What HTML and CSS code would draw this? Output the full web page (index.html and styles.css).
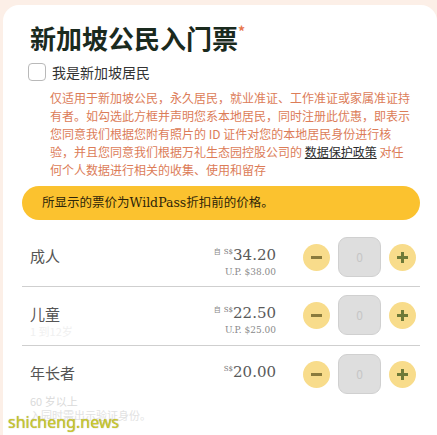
FILE: index.html
```html
<!DOCTYPE html>
<html lang="zh">
<head>
  <meta charset="UTF-8" />
  <meta name="viewport" content="width=device-width, initial-scale=1.0"/>
  <title>新加坡公民入门票</title>
  <link rel="stylesheet" href="styles.css">
</head>
<body>
  <div class="card">
    <h1 class="ticket-title">新加坡公民入门票<span class="required">*</span></h1>

    <label class="resident-check">
      <span class="checkbox"></span>
      <span>我是新加坡居民</span>
    </label>

    <p class="notice">
      仅适用于新加坡公民，永久居民，就业准证、工作准证或家属准证持<br>
      有者。如勾选此方框并声明您系本地居民，同时注册此优惠，即表示<br>
      您同意我们根据您附有照片的 ID 证件对您的本地居民身份进行核<br>
      验，并且您同意我们根据万礼生态园控股公司的 <a href="#">数据保护政策</a> 对任<br>
      何个人数据进行相关的收集、使用和留存
    </p>

    <div class="banner">所显示的票价为WildPass折扣前的价格。</div>

    <div class="ticket-list">
      <div class="ticket-row">
        <div class="ticket-info">
          <div class="ticket-name">成人</div>
        </div>
        <div class="price">
          <div class="price-main"><span class="from">自</span><span class="cur">S$</span>34.20</div>
          <div class="price-up">U.P. $38.00</div>
        </div>
        <div class="stepper">
          <span class="step-btn minus"></span>
          <span class="qty">0</span>
          <span class="step-btn plus"></span>
        </div>
      </div>

      <div class="ticket-row">
        <div class="ticket-info">
          <div class="ticket-name">儿童</div>
          <div class="ticket-sub faint">1 到12岁</div>
        </div>
        <div class="price">
          <div class="price-main"><span class="from">自</span><span class="cur">S$</span>22.50</div>
          <div class="price-up">U.P. $25.00</div>
        </div>
        <div class="stepper">
          <span class="step-btn minus"></span>
          <span class="qty">0</span>
          <span class="step-btn plus"></span>
        </div>
      </div>

      <div class="ticket-row last">
        <div class="ticket-info">
          <div class="ticket-name">年长者</div>
          <div class="ticket-sub senior">60 岁以上</div>
          <div class="ticket-sub">入园时需出示验证身份。</div>
        </div>
        <div class="price">
          <div class="price-main"><span class="cur">S$</span>20.00</div>
        </div>
        <div class="stepper">
          <span class="step-btn minus"></span>
          <span class="qty">0</span>
          <span class="step-btn plus"></span>
        </div>
      </div>
    </div>
  </div>

  <div class="watermark">shicheng.news</div>
</body>
</html>
```

FILE: styles.css
```css
body {
  font-family: "Noto Sans CJK SC", "Noto Sans", sans-serif;
  background: #fcefe7;
  margin: 0;
  padding: 0;
  height: 435px;
  overflow: hidden;
}

.card {
  margin: 5px 0 0 3px;
  background: #fff;
  border-radius: 16px 16px 0 0;
  padding: 17px 17px 0 19px;
  min-height: 430px;
  box-sizing: border-box;
}

.ticket-title {
  margin: 0 0 0 8px;
  font-size: 26px;
  line-height: 32px;
  font-weight: 700;
  color: #1a2a1e;
}

.required {
  color: #e8764d;
  font-size: 14px;
  vertical-align: top;
  line-height: 18px;
}

.resident-check {
  display: flex;
  align-items: center;
  height: 20px;
  margin-top: 8px;
  font-size: 14px;
  color: #333;
}

.checkbox {
  width: 16px;
  height: 16px;
  border: 1px solid #b9b9b9;
  border-radius: 4px;
  margin: 0 6px 0 6px;
}

.notice {
  margin: 7px 0 0 28px;
  font-size: 12px;
  line-height: 18px;
  color: #dc7c58;
  white-space: nowrap;
}

.notice a {
  color: #2b2b2b;
  text-decoration: underline;
}

.banner {
  margin-top: 7px;
  height: 34px;
  line-height: 34px;
  border-radius: 17px;
  background: #fbc22f;
  padding-left: 20px;
  font-family: "DejaVu Serif", "Noto Sans CJK SC", serif;
  font-size: 12.5px;
  color: #2e2508;
}

.ticket-list {
  margin-top: 9px;
}

.ticket-row {
  display: flex;
  align-items: flex-start;
  padding: 8px 4px 7px 8px;
  border-bottom: 1px solid #cfcfcf;
}

.ticket-row.last {
  border-bottom: none;
}

.ticket-info {
  flex: 1;
  padding-top: 9px;
}

.ticket-name {
  font-size: 15px;
  line-height: 20px;
  color: #555;
}

.ticket-sub {
  font-size: 11px;
  line-height: 14px;
  color: #e2e2e2;
}

.ticket-sub.faint {
  color: #f0f0f0;
}

.ticket-sub.senior {
  margin-top: 11px;
  color: #dadada;
}

.price {
  text-align: right;
  padding-top: 8px;
  margin-right: 27px;
  font-family: "DejaVu Serif", serif;
  color: #5a5a5a;
}

.price-main {
  font-size: 15px;
  line-height: 20px;
}

.from {
  font-family: "Noto Sans CJK SC", sans-serif;
  font-size: 7px;
  line-height: 1;
  vertical-align: 6px;
  margin-right: 3px;
  color: #888;
}

.cur {
  font-size: 7px;
  line-height: 1;
  vertical-align: 6px;
  color: #777;
}

.price-up {
  font-size: 9px;
  line-height: 14px;
  color: #8a8a8a;
}

.stepper {
  display: flex;
  align-items: center;
  gap: 8px;
}

.step-btn {
  position: relative;
  width: 27px;
  height: 27px;
  border-radius: 50%;
  background: #f8dc8b;
}

.step-btn::before,
.step-btn::after {
  content: "";
  position: absolute;
  left: 8px;
  top: 12px;
  width: 11px;
  height: 3px;
  background: #8a7b3c;
}

.minus::after {
  display: none;
}

.plus::before {
  background: #6e7a38;
}

.plus::after {
  left: 12px;
  top: 8px;
  width: 3px;
  height: 11px;
  background: #6e7a38;
}

.qty {
  width: 41px;
  height: 38px;
  line-height: 38px;
  text-align: center;
  border: 1px solid #d0d0d0;
  border-radius: 9px;
  background: #dedede;
  color: #c6c6c6;
  font-size: 12px;
}

.watermark {
  position: absolute;
  left: 8px;
  bottom: 2px;
  font-family: "Noto Sans", sans-serif;
  font-size: 16px;
  color: #cdc82a;
  text-shadow: 0 0 1px rgba(80, 80, 0, 0.6);
}
```
